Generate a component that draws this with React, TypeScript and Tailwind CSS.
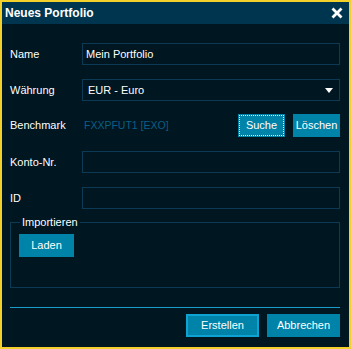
import React from 'react';

const font = { fontFamily: '"Liberation Sans", Arial, sans-serif' };

const Row = ({ label, children }: { label: string; children: React.ReactNode }) => (
  <div className="flex items-center">
    <div className="w-[72px] text-[11px] text-white">{label}</div>
    <div className="flex-1">{children}</div>
  </div>
);

const Field = ({ value = '' }: { value?: string }) => (
  <div className="h-[22px] border border-[#0c3a54] bg-[#001620] px-[3px] flex items-center text-[11px] text-white">
    {value}
  </div>
);

export default function App() {
  return (
    <div style={font} className="w-[351px] h-[349px] border-2 border-[#f4d12a] bg-[#001620] flex flex-col">
      <div className="h-[22px] bg-[#003550] flex items-center justify-between pl-[3px] pr-[6px]">
        <span className="text-[12px] font-bold text-white">Neues Portfolio</span>
        <svg width="12" height="12" viewBox="0 0 12 12">
          <path d="M1.5 1.5L10.5 10.5M10.5 1.5L1.5 10.5" stroke="#fff" strokeWidth="2.8" />
        </svg>
      </div>
      <div className="flex-1 pl-[8px] pr-[9px] pt-[19px] flex flex-col">
        <Row label="Name">
          <Field value="Mein Portfolio" />
        </Row>
        <div className="mt-[14px]">
          <Row label="Währung">
            <div className="h-[22px] border border-[#0c3a54] px-[5px] flex items-center justify-between text-[11px] text-white">
              <span>EUR - Euro</span>
              <svg width="8" height="5" viewBox="0 0 8 5" className="mr-[1px]">
                <path d="M0 0H8L4 5Z" fill="#fff" />
              </svg>
            </div>
          </Row>
        </div>
        <div className="mt-[13px]">
          <Row label="Benchmark">
            <div className="h-[23px] flex items-center">
              <span className="pl-[2px] text-[10.5px] text-[#0b5f85] flex-1">FXXPFUT1 [EXO]</span>
              <button className="w-[47px] h-[23px] bg-[#0083a8] text-[11px] text-white outline-1 outline-dotted outline-white -outline-offset-2">
                Suche
              </button>
              <button className="ml-[8px] w-[47px] h-[23px] bg-[#0083a8] text-[11px] text-white">
                Löschen
              </button>
            </div>
          </Row>
        </div>
        <div className="mt-[14px]">
          <Row label="Konto-Nr.">
            <Field />
          </Row>
        </div>
        <div className="mt-[14px]">
          <Row label="ID">
            <Field />
          </Row>
        </div>
        <fieldset className="mt-[6px] h-[73px] border border-[#0c3a54] px-[8px] pb-0 pt-0">
          <legend className="px-[2px] ml-[1px] text-[11px] text-white leading-[14px]">Importieren</legend>
          <button className="mt-[5px] w-[55px] h-[23px] bg-[#0083a8] text-[11px] text-white">Laden</button>
        </fieldset>
        <div className="mt-[19px] h-[1px] bg-[#1a9ccc]" />
        <div className="mt-[6px] flex justify-end gap-[8px]">
          <button className="w-[73px] h-[23px] bg-[#0083a8] border-2 border-[#0da3d2] text-[11px] text-white">
            Erstellen
          </button>
          <button className="w-[73px] h-[23px] bg-[#0083a8] text-[11px] text-white">Abbrechen</button>
        </div>
      </div>
    </div>
  );
}
